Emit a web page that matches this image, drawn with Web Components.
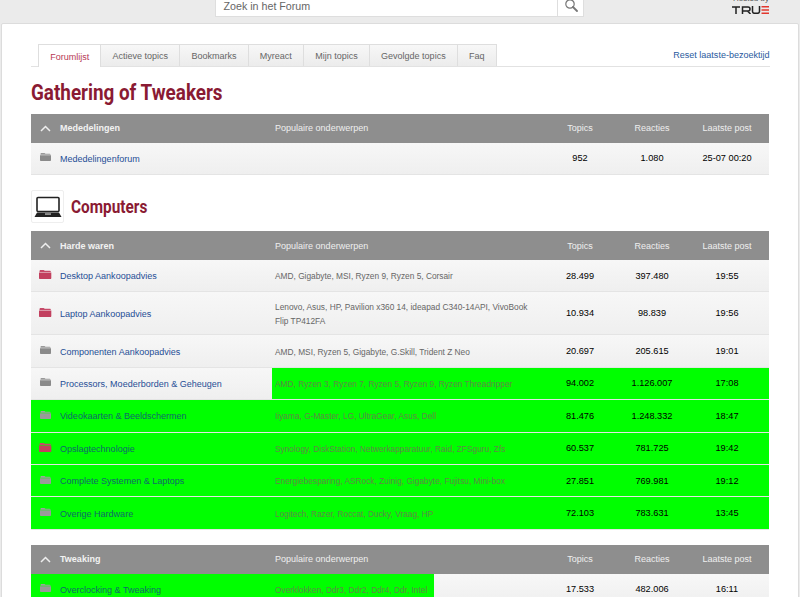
<!DOCTYPE html>
<html lang="nl"><head><meta charset="utf-8"><title>Gathering of Tweakers</title>
<style>
html,body{margin:0;padding:0;height:597px;overflow:hidden;background:#ebebeb;font-family:"Liberation Sans",Arial,sans-serif}
</style></head><body>
<got-page>
  <got-top></got-top>
  <got-card>
    <got-tabs>
      <got-tab active>Forumlijst</got-tab><got-tab>Actieve topics</got-tab><got-tab>Bookmarks</got-tab><got-tab>Myreact</got-tab><got-tab>Mijn topics</got-tab><got-tab>Gevolgde topics</got-tab><got-tab>Faq</got-tab>
      <span slot="side">Reset laatste-bezoektijd</span>
    </got-tabs>
    <got-title>Gathering of Tweakers</got-title>
    <got-table>
      <got-head>Mededelingen</got-head>
      <got-row topics="952" reacties="1.080" last="25-07 00:20">Mededelingenforum</got-row>
    </got-table>
    <got-cat>Computers</got-cat>
    <got-table>
      <got-head>Harde waren</got-head>
      <got-row red topics="28.499" reacties="397.480" last="19:55">Desktop Aankoopadvies<span slot="pop">AMD, Gigabyte, MSI, Ryzen 9, Ryzen 5, Corsair</span></got-row>
      <got-row red tall topics="10.934" reacties="98.839" last="19:56">Laptop Aankoopadvies<span slot="pop">Lenovo, Asus, HP, Pavilion x360 14, ideapad C340-14API, VivoBook Flip TP412FA</span></got-row>
      <got-row topics="20.697" reacties="205.615" last="19:01">Componenten Aankoopadvies<span slot="pop">AMD, MSI, Ryzen 5, Gigabyte, G.Skill, Trident Z Neo</span></got-row>
      <got-row green-pop green-from="241px" green-to="100%" topics="94.002" reacties="1.126.007" last="17:08">Processors, Moederborden &amp; Geheugen<span slot="pop">AMD, Ryzen 3, Ryzen 7, Ryzen 5, Ryzen 9, Ryzen Threadripper</span></got-row>
      <got-row green-name green-pop green-from="0" green-to="100%" topics="81.476" reacties="1.248.332" last="18:47">Videokaarten &amp; Beeldschermen<span slot="pop">Iiyama, G-Master, LG, UltraGear, Asus, Dell</span></got-row>
      <got-row green-name green-pop red green-from="0" green-to="100%" topics="60.537" reacties="781.725" last="19:42">Opslagtechnologie<span slot="pop">Synology, DiskStation, Netwerkapparatuur, Raid, ZFSguru, Zfs</span></got-row>
      <got-row green-name green-pop green-from="0" green-to="100%" topics="27.851" reacties="769.981" last="19:12">Complete Systemen &amp; Laptops<span slot="pop">Energiebesparing, ASRock, Zuinig, Gigabyte, Fujitsu, Mini-box</span></got-row>
      <got-row green-name green-pop green-from="0" green-to="100%" topics="72.103" reacties="783.631" last="13:45">Overige Hardware<span slot="pop">Logitech, Razer, Roccat, Ducky, Vraag, HP</span></got-row>
    </got-table>
    <got-table>
      <got-head>Tweaking</got-head>
      <got-row green-name green-pop green-from="0" green-to="403px" topics="17.533" reacties="482.006" last="16:11">Overclocking &amp; Tweaking<span slot="pop">Overklokken, Ddr3, Ddr2, Ddr4, Ddr, Intel</span></got-row>
    </got-table>
  </got-card>
</got-page>
<script>
const GRID='29px 215px 270px 70px 74px 76px 4px';
const TITLE='"Roboto","Liberation Sans",sans-serif';
function def(name,html){
  customElements.define(name,class extends HTMLElement{
    connectedCallback(){
      if(this.shadowRoot)return;
      const r=this.attachShadow({mode:'open'});
      r.innerHTML=typeof html==='function'?html(this):html;
    }
  });
}
def('got-page',`<style>:host{display:flex;flex-direction:column;width:800px;color:#333}</style><slot></slot>`);
def('got-top',`<style>
:host{display:flex;height:23px;box-sizing:border-box;padding:0 31px 0 215px;align-items:flex-start;justify-content:space-between}
.s{display:flex;width:369px;height:17px;box-sizing:border-box;background:#fff;border:1px solid #dedede;border-top:0}
.i{flex:1;font-size:10.700px;line-height:12px;padding:0 0 0 7.500px;color:#666}
.b{width:25px;border-left:1px solid #dedede;display:flex;justify-content:center;align-items:flex-start}
.l{display:flex;flex-direction:column;align-items:flex-end;width:36px}
.h{height:3px;overflow:hidden;font-size:8px;line-height:3px;white-space:nowrap;color:#555;display:flex;align-items:flex-end}
.h span{position:relative;line-height:8px;display:block;margin-top:-6px}
svg{display:block}
</style>
<div class="s"><div class="i">Zoek in het Forum</div><div class="b"><svg width="16" height="12" viewBox="0 0 16 12"><circle cx="7" cy="4" r="4.200" fill="none" stroke="#777" stroke-width="1.200"/><path d="M10 7l4 4" stroke="#777" stroke-width="1.800" stroke-linecap="round"/></svg></div></div>
<div class="l"><div class="h"><span>Hosted by</span></div>
<svg style="margin-top:3px" width="37" height="8" viewBox="0 0 37 8"><g fill="none" stroke="#222" stroke-width="1.500"><path d="M0 1h8M4 1v7"/><path d="M10.500 8V1h5.500a2 2 0 0 1 0 4h-5.500M15.500 5l3 3"/><path d="M20.500 0v5.500a2 2 0 0 0 2 1.800h3a2 2 0 0 0 2-1.800V0"/></g><path d="M29.500 0h7.500v1.500h-7.500zM29.500 3.200h7.500v1.500h-7.500zM29.500 6.500h7.500V8h-7.500z" fill="#e2382f"/></svg></div>`);
def('got-card',`<style>:host{display:block;box-sizing:border-box;width:797.500px;margin-left:1px;height:700px;background:#fff;border:1px solid #dcdcdc;border-radius:2px;padding:20px 28px 0 29px}</style><slot></slot>`);
def('got-tabs',`<style>
:host{display:flex;height:23px;box-sizing:border-box;border-bottom:1px solid #e2e2e2;padding-left:7px;align-items:flex-end;width:738.500px}
.t{display:flex;align-items:flex-end;flex:1}
.x{font-size:9.020px;color:#2a5a9e;line-height:11px;align-self:flex-start;padding-top:6px;margin-left:auto;white-space:nowrap}
</style><div class="t"><slot></slot></div><div class="x"><slot name="side"></slot></div>`);
def('got-tab',h=>`<style>
:host{display:block;box-sizing:border-box;height:${h.hasAttribute('active')?23:22}px;margin-bottom:${h.hasAttribute('active')?-1:0}px;padding:0 11.150px;border:1px solid #dedede;border-left:0;border-bottom:0;font-size:9.020px;line-height:22px;color:${h.hasAttribute('active')?'#b83a55':'#666'};background:${h.hasAttribute('active')?'#fff':'linear-gradient(#f7f7f7,#ececec)'};white-space:nowrap}
:host([active]){border-left:1px solid #dedede;padding:1px 11.150px 0}
</style><slot></slot>`);
def('got-title',`<style>:host{display:block;height:47px;box-sizing:border-box;padding-top:11px;font:700 22.800px/30px ${TITLE};color:#8a1a33;white-space:nowrap}
span{display:inline-block;transform:scaleX(.827);transform-origin:0 50%}</style><span><slot></slot></span>`);
def('got-table',`<style>:host{display:flex;flex-direction:column;width:738px;margin-bottom:15.400px}</style><slot></slot>`);
def('got-head',`<style>
:host{display:grid;grid-template-columns:${GRID};height:28.600px;align-items:center;background:#8e8e8e;font-size:9.020px;color:#eee;flex:none}
.c{display:flex;justify-content:center}
b{color:#f2f2f2}.m{text-align:center}
</style><div class="c"><svg width="11" height="7" viewBox="0 0 11 7"><path d="M1 6l4.500-4.500L10 6" fill="none" stroke="#eee" stroke-width="1.500"/></svg></div><b><slot></slot></b><div>Populaire onderwerpen</div><div class="m">Topics</div><div class="m">Reacties</div><div class="m">Laatste post</div><div></div>`);
def('got-row',h=>{
 const red=h.hasAttribute('red');const from=h.getAttribute('green-from'),to=h.getAttribute('green-to');
 const gn=h.hasAttribute('green-name'),gp=h.hasAttribute('green-pop');
 const c=red?['#c64a69','#c2405f']:(gn?['#a0a0a0','#9a9a9a']:['#999','#8a8a8a']);
 const w=red?12.300:11,ht=red?9.300:8;
 const bg=from!==null?`linear-gradient(#0f0,#0f0) ${from==='0'?'0 0':from+' 0'} / ${to==='100%'?(from==='0'?'100%':'calc(100% - '+from+')'):to} 100% no-repeat,`:'';
 return `<style>
:host{display:grid;grid-template-columns:${GRID};height:${h.hasAttribute('tall')?43:32.400}px;box-sizing:border-box;align-items:center;flex:none;background:${bg}linear-gradient(#f7f7f7,#efefef);background-clip:padding-box;border-bottom:1.400px solid #e4e4e4;font-size:9.200px;color:#000}
.i{display:flex;justify-content:center}
.i svg{margin-top:-2px}
.n{color:${gn?'#116a6a':'#1f4e96'};white-space:nowrap;font-size:9.020px;padding-top:1px}
.p{color:${gp?'#608848':'#666'};line-height:14px;font-size:8.340px;padding:1px 6px 0 0}
.m{text-align:center}
</style><div class="i"><svg width="${w}" height="${ht}" viewBox="0 0 12 9" preserveAspectRatio="none"><path d="M.5 1.200C.5.500 1 0 1.700 0h2.800c.6 0 1 .800 1.500 .800h4.500c.7 0 1 .400 1 1V2H.5z" fill="${c[0]}"/><path d="M0 2.500h12v5.300c0 .700-.500 1.200-1.200 1.200H1.200C.5 9 0 8.500 0 7.800z" fill="${c[1]}"/></svg></div><div class="n"><slot></slot></div><div class="p"><slot name="pop"></slot></div><div class="m">${h.getAttribute('topics')}</div><div class="m">${h.getAttribute('reacties')}</div><div class="m">${h.getAttribute('last')}</div><div></div>`;
});
def('got-cat',`<style>
:host{display:flex;align-items:center;gap:7px;height:33px;margin-bottom:8px;font:700 18px/20px ${TITLE};color:#8a1a33}
.b{width:33px;height:33px;box-sizing:border-box;border:1px solid #eee;border-radius:2px;display:flex;align-items:center;justify-content:center}
.t{display:inline-block;transform:scaleX(.854);transform-origin:0 50%;padding-top:1px}
</style><div class="b"><svg width="28" height="22" viewBox="0 0 28 22"><rect x="3" y="1.500" width="22" height="14" rx="1" fill="#fff" stroke="#222" stroke-width="1.600"/><path d="M3 16.500h22l2.500 4.500H.5z" fill="#222"/><rect x="11" y="17.300" width="6" height="1.500" fill="#aaa"/></svg></div><span class="t"><slot></slot></span>`);
</script>
</body></html>
